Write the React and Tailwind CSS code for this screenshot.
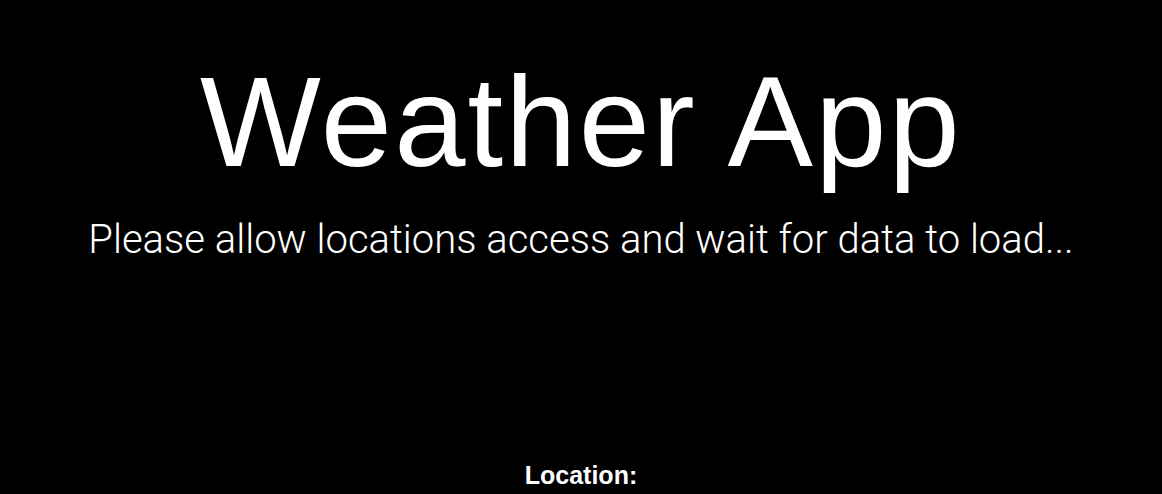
export default function App() {
  return (
    <div className="min-h-screen w-full bg-black text-white flex flex-col items-center" style={{ fontFamily: '"Liberation Sans", Arial, sans-serif' }}>
      <h1 className="mt-[58px] text-[128px] leading-[128px] font-normal tracking-[2.2px]">Weather App</h1>
      <p className="mt-[34px] text-[40px] leading-[40px] font-light" style={{ fontFamily: 'Roboto, "Liberation Sans", sans-serif' }}>Please allow locations access and wait for data to load...</p>
      <div className="mt-[203px] text-[25px] leading-[25px] font-bold">Location:</div>
    </div>
  );
}
